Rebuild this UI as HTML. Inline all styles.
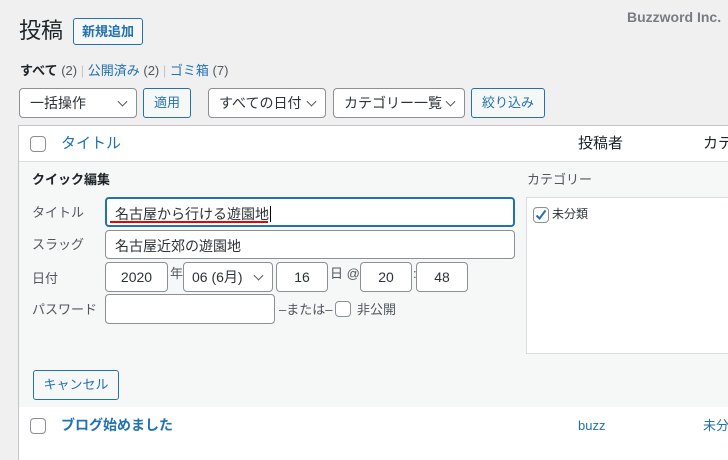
<!DOCTYPE html>
<html style="width:728px;height:460px;overflow:hidden"><head><meta charset="utf-8"><style>
*{box-sizing:border-box;margin:0;padding:0}
body{width:728px;height:460px;overflow:hidden;background:#f0f0f1;font-family:"Liberation Sans","Noto Sans CJK JP",sans-serif;color:#3c434a;font-size:13px;position:relative}
.a{position:absolute;white-space:nowrap;line-height:1.3}
.btn{position:absolute;border:1px solid #2271b1;border-radius:3px;color:#2271b1;background:#f6f7f7;font-size:13px;text-align:center}
.sel{position:absolute;border:1px solid #8c8f94;border-radius:4px;background:#fff;color:#2c3338;font-size:14px;padding-left:10px}
.sel:after{content:"";position:absolute;right:10px;top:50%;width:6px;height:6px;border-right:1.5px solid #50575e;border-bottom:1.5px solid #50575e;transform:translateY(-70%) rotate(45deg)}
.inp{position:absolute;border:1px solid #8c8f94;border-radius:4px;background:#fff;color:#2c3338;font-size:14px}
.cb{position:absolute;width:16px;height:16px;border:1px solid #8c8f94;border-radius:4px;background:#fff}
</style></head><body>
<div class="a" style="left:627px;top:8px;font-size:14px;color:#787c82;font-weight:bold">Buzzword Inc.</div>
<div class="a" style="left:19px;top:17px;font-size:22px;color:#1d2327">投稿</div>
<div class="btn" style="left:73px;top:18px;width:70px;height:27px;line-height:25px;font-weight:bold">新規追加</div>
<div class="a" style="left:20px;top:63px;font-size:13px"><b style="color:#1d2327">すべて</b> <span style="color:#50575e">(2)</span> <span style="color:#c3c4c7">|</span> <span style="color:#2271b1">公開済み</span> <span style="color:#50575e">(2)</span> <span style="color:#c3c4c7">|</span> <span style="color:#2271b1">ゴミ箱</span> <span style="color:#50575e">(7)</span></div>
<div class="sel" style="left:19px;top:88px;width:118px;height:30px;line-height:28px">一括操作</div>
<div class="btn" style="left:143px;top:88px;width:48px;height:30px;line-height:28px">適用</div>
<div class="sel" style="left:208px;top:88px;width:118px;height:30px;line-height:28px">すべての日付</div>
<div class="sel" style="left:333px;top:88px;width:132px;height:30px;line-height:28px">カテゴリー一覧</div>
<div class="btn" style="left:471px;top:88px;width:74px;height:30px;line-height:28px">絞り込み</div>

<div style="position:absolute;left:18px;top:125px;width:710px;height:335px;border:1px solid #c3c4c7;border-bottom:none;border-right:none;background:#fff"></div>
<div style="position:absolute;left:19px;top:161px;width:709px;height:246px;background:#f6f7f7;border-top:1px solid #dcdcde"></div>
<div class="cb" style="left:30px;top:136px"></div>
<div class="a" style="left:61px;top:134px;font-size:15px;color:#2271b1">タイトル</div>
<div class="a" style="left:578px;top:134px;font-size:15px;color:#1d2327">投稿者</div>
<div class="a" style="left:703px;top:134px;font-size:15px;color:#1d2327">カテ</div>

<div class="a" style="left:32px;top:172px;font-weight:bold;color:#1d2327">クイック編集</div>
<div class="a" style="left:527px;top:172px;color:#50575e">カテゴリー</div>
<div class="a" style="left:32px;top:205px;color:#50575e">タイトル</div>
<div class="inp" style="left:105px;top:197px;width:410px;height:30px;border:2px solid #2271b1;padding:5px 0 0 8px">名古屋から行ける遊園地<span style="border-left:1px solid #000;margin-left:1px"></span></div>
<div style="position:absolute;left:110px;top:221px;width:158px;height:2px;background:#e00"></div>
<div class="a" style="left:32px;top:237px;color:#50575e">スラッグ</div>
<div class="inp" style="left:105px;top:230px;width:410px;height:29px;padding:5px 0 0 9px">名古屋近郊の遊園地</div>
<div class="a" style="left:32px;top:271px;color:#50575e">日付</div>
<div class="inp" style="left:105px;top:262px;width:63px;height:30px;line-height:28px;text-align:center">2020</div>
<div class="a" style="left:170px;top:266px;color:#50575e">年</div>
<div class="sel" style="left:183px;top:262px;width:90px;height:30px;line-height:28px;padding-left:8px">06 (6月)</div>
<div class="inp" style="left:276px;top:262px;width:52px;height:30px;line-height:28px;text-align:center">16</div>
<div class="a" style="left:330px;top:266px;color:#50575e">日 @</div>
<div class="inp" style="left:360px;top:262px;width:52px;height:30px;line-height:28px;text-align:center">20</div>
<div class="a" style="left:413px;top:266px;color:#50575e">:</div>
<div class="inp" style="left:416px;top:262px;width:52px;height:30px;line-height:28px;text-align:center">48</div>
<div class="a" style="left:32px;top:302px;color:#50575e">パスワード</div>
<div class="inp" style="left:105px;top:294px;width:170px;height:30px"></div>
<div class="a" style="left:279px;top:302px;color:#50575e">–または–</div>
<div class="cb" style="left:335px;top:301px"></div>
<div class="a" style="left:357px;top:302px;color:#50575e">非公開</div>

<div style="position:absolute;left:526px;top:197px;width:210px;height:157px;background:#fff;border:1px solid #dcdcde"></div>
<div class="cb" style="left:533px;top:207px"><svg width="14" height="14" viewBox="0 0 14 14" style="position:absolute;left:0;top:0"><path d="M2.5 7.5l3 3 6-8" fill="none" stroke="#2271b1" stroke-width="2"/></svg></div>
<div class="a" style="left:552px;top:207px;font-size:12px;color:#2c3338">未分類</div>

<div class="btn" style="left:33px;top:370px;width:86px;height:30px;line-height:28px">キャンセル</div>

<div class="cb" style="left:30px;top:418px"></div>
<div class="a" style="left:61px;top:416px;font-size:14px;font-weight:bold;color:#2271b1">ブログ始めました</div>
<div class="a" style="left:578px;top:418px;color:#2271b1">buzz</div>
<div class="a" style="left:703px;top:418px;color:#2271b1">未分</div>
</body></html>
